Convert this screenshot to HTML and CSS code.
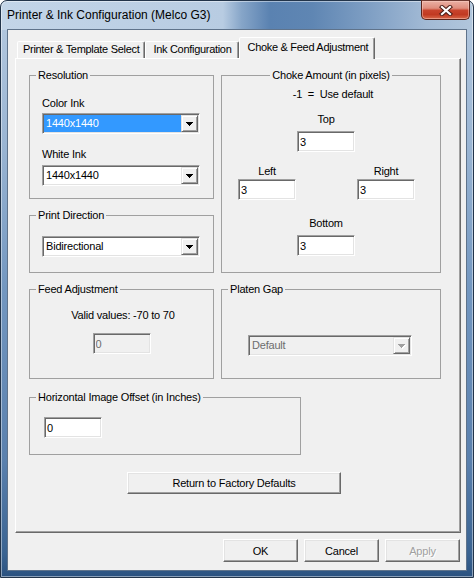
FILE: index.html
```html
<!DOCTYPE html>
<html>
<head>
<meta charset="utf-8">
<title>Printer &amp; Ink Configuration</title>
<link rel="stylesheet" href="styles.css">
</head>
<body>
<div class="window">
  <div class="titlebar">
    <span class="title">Printer &amp; Ink Configuration (Melco G3)</span>
    <div class="close">
      <svg width="14" height="11" viewBox="0 0 14 11">
        <path d="M3 2 L11 9 M11 2 L3 9" stroke="#4a1d16" stroke-width="4.2" stroke-linecap="square" fill="none"/>
        <path d="M3 2 L11 9 M11 2 L3 9" stroke="#fff" stroke-width="2.2" stroke-linecap="square" fill="none"/>
      </svg>
    </div>
  </div>
  <div class="client">
    <div class="tabs">
      <div class="tab">Printer &amp; Template Select</div>
      <div class="tab wide">Ink Configuration</div>
      <div class="tab active">Choke &amp; Feed Adjustment</div>
    </div>
    <div class="panel">
      <div class="grid">
        <fieldset class="box res">
          <legend>Resolution</legend>
          <div class="body">
            <div class="lbl first">Color Ink</div>
            <div class="combo">
              <span class="val sel">1440x1440</span>
              <span class="drop"><svg width="7" height="4" viewBox="0 0 7 4"><rect x="0" y="0" width="7" height="1"/><rect x="1" y="1" width="5" height="1"/><rect x="2" y="2" width="3" height="1"/><rect x="3" y="3" width="1" height="1"/></svg></span>
            </div>
            <div class="lbl second">White Ink</div>
            <div class="combo">
              <span class="val">1440x1440</span>
              <span class="drop"><svg width="7" height="4" viewBox="0 0 7 4"><rect x="0" y="0" width="7" height="1"/><rect x="1" y="1" width="5" height="1"/><rect x="2" y="2" width="3" height="1"/><rect x="3" y="3" width="1" height="1"/></svg></span>
            </div>
          </div>
        </fieldset>
        <fieldset class="box choke">
          <legend>Choke Amount (in pixels)</legend>
          <div class="note">-1&nbsp; =&nbsp; Use default</div>
          <div class="choke-grid">
            <div class="clbl top-l">Top</div>
            <input class="edit top-e" value="3">
            <div class="clbl left-l">Left</div>
            <div class="clbl right-l">Right</div>
            <input class="edit left-e" value="3">
            <input class="edit right-e" value="3">
            <div class="clbl bot-l">Bottom</div>
            <input class="edit bot-e" value="3">
          </div>
        </fieldset>
        <fieldset class="box dir">
          <legend>Print Direction</legend>
          <div class="body">
            <div class="combo">
              <span class="val">Bidirectional</span>
              <span class="drop"><svg width="7" height="4" viewBox="0 0 7 4"><rect x="0" y="0" width="7" height="1"/><rect x="1" y="1" width="5" height="1"/><rect x="2" y="2" width="3" height="1"/><rect x="3" y="3" width="1" height="1"/></svg></span>
            </div>
          </div>
        </fieldset>
        <fieldset class="box feed">
          <legend>Feed Adjustment</legend>
          <div class="valid">Valid values: -70 to 70</div>
          <input class="edit disabled" value="0" disabled>
        </fieldset>
        <fieldset class="box platen">
          <legend>Platen Gap</legend>
          <div class="body">
            <div class="combo disabled">
              <span class="val">Default</span>
              <span class="drop"><svg width="8" height="5" viewBox="0 0 8 5"><g fill="#fff" transform="translate(1 1)"><rect x="0" y="0" width="7" height="1"/><rect x="1" y="1" width="5" height="1"/><rect x="2" y="2" width="3" height="1"/><rect x="3" y="3" width="1" height="1"/></g><g fill="#a0a0a0"><rect x="0" y="0" width="7" height="1"/><rect x="1" y="1" width="5" height="1"/><rect x="2" y="2" width="3" height="1"/><rect x="3" y="3" width="1" height="1"/></g></svg></span>
            </div>
          </div>
        </fieldset>
      </div>
      <fieldset class="box offset">
        <legend>Horizontal Image Offset (in Inches)</legend>
        <div class="body">
          <input class="edit" value="0">
        </div>
      </fieldset>
      <button class="btn factory">Return to Factory Defaults</button>
    </div>
    <div class="actions">
      <button class="btn">OK</button>
      <button class="btn">Cancel</button>
      <button class="btn off">Apply</button>
    </div>
  </div>
</div>
</body>
</html>
```

FILE: styles.css
```css
* { box-sizing: border-box; }
html, body { margin: 0; padding: 0; }
body {
  width: 474px;
  height: 578px;
  overflow: hidden;
  background: #fff;
  font-family: "Liberation Sans", Arial, sans-serif;
  font-size: 11px;
  color: #000;
  letter-spacing: -0.2px;
}

.window {
  width: 474px;
  height: 578px;
  border: 1px solid #22344a;
  border-radius: 7px 7px 0 0;
  display: flex;
  flex-direction: column;
  background:
    linear-gradient(90deg, #c3d5e8 0%, #b8cce2 47%, #86a5c8 51%, #5a82b1 57%, #5f86b3 66%, #7f9fc4 78%, #a2bad5 90%, #b1c6dc 100%) top / 100% 29px no-repeat,
    linear-gradient(180deg, #b6cae0 0%, #9ab5d3 25%, #7397c0 50%, #5a80ad 80%, #3a6391 96%, #2b5280 100%);
  box-shadow: inset 0 0 0 1px rgba(255, 255, 255, 0.45);
}

.titlebar {
  height: 28px;
  display: flex;
  align-items: flex-start;
  padding-left: 6px;
}
.title {
  font-size: 12px;
  letter-spacing: 0;
  line-height: 28px;
  color: #000;
  white-space: nowrap;
}
.close {
  margin-left: auto;
  margin-right: 3px;
  margin-top: -1px;
  width: 49px;
  height: 20px;
  border: 1px solid #5b241b;
  border-top-color: #6e3a32;
  border-radius: 0 0 5px 5px;
  background: linear-gradient(180deg, #eab0a4 0%, #df8d7d 40%, #c8442d 52%, #c13a22 75%, #d8684a 100%);
  box-shadow: inset 0 0 0 1px rgba(255, 215, 205, 0.45);
  display: flex;
  align-items: center;
  justify-content: center;
}

.client {
  flex: 1;
  margin: 0 6px 6px;
  background: #f0f0f0;
  border: 1px solid #5f738b;
  padding: 7px 5px 0 7px;
  display: flex;
  flex-direction: column;
}

.tabs {
  display: flex;
  align-items: flex-end;
  height: 21px;
  padding-left: 2px;
}
.tab {
  height: 17px;
  padding: 0 5px 2px;
  border: 1px solid;
  border-bottom: none;
  border-color: #fff #696969 transparent #fff;
  border-radius: 2px 2px 0 0;
  box-shadow: inset -1px 0 #a0a0a0;
  background: #f0f0f0;
  line-height: 14px;
  letter-spacing: -0.3px;
  white-space: nowrap;
}
.tab.wide { padding: 0 7px 2px; }
.tab.active {
  height: 22px;
  margin-bottom: -1px;
  padding: 2px 6px 0 7px;
  position: relative;
  z-index: 1;
}

.panel {
  height: 475px;
  border: 1px solid;
  border-color: #fff #696969 #696969 #fff;
  box-shadow: inset -1px -1px #a0a0a0;
  padding: 10px 0 0 13px;
}

.grid {
  display: grid;
  grid-template-columns: 185px 220px;
  grid-template-rows: 130px 64px 96px;
  column-gap: 7px;
  row-gap: 10px;
}

.box {
  margin: 0;
  padding: 0;
  min-width: 0;
  border: 1px solid #a0a0a0;
}
.box legend {
  margin-left: 6px;
  padding: 0 2px;
  line-height: 13px;
  white-space: nowrap;
}

.res { grid-column: 1; grid-row: 1; }
.res .body { padding-left: 12px; }
.choke { grid-column: 2; grid-row: 1 / span 2; }
.choke legend { margin: 0 auto; }
.dir { grid-column: 1; grid-row: 2; }
.dir .body { padding: 14px 0 0 12px; }
.feed { grid-column: 1; grid-row: 3; }
.platen { grid-column: 2; grid-row: 3; }
.platen .body { padding: 39px 0 0 26px; }

.lbl { line-height: 13px; }
.lbl.first { margin-top: 15px; margin-bottom: 3px; }
.lbl.second { margin-top: 14px; margin-bottom: 4px; }

.combo {
  display: flex;
  width: 158px;
  height: 21px;
  border: 1px solid;
  border-color: #a0a0a0 #fff #fff #a0a0a0;
  box-shadow: inset 1px 1px #696969, inset -1px -1px #e3e3e3;
  background: #fff;
  padding: 1px;
}
.combo .val {
  flex: 1;
  padding-left: 2px;
  line-height: 17px;
  white-space: nowrap;
}
.combo .val.sel {
  background: #3399ff;
  color: #fff;
}
.combo .drop {
  width: 17px;
  height: 17px;
  background: #f0f0f0;
  border: 1px solid;
  border-color: #e3e3e3 #696969 #696969 #e3e3e3;
  box-shadow: inset 1px 1px #fff, inset -1px -1px #a0a0a0;
  display: flex;
  align-items: center;
  justify-content: center;
  padding-top: 1px;
}
.combo .drop svg { fill: #000; display: block; }
.combo.disabled { width: 164px; background: #f0f0f0; }
.combo.disabled .val { color: #6d6d6d; }

.edit {
  display: block;
  width: 58px;
  height: 21px;
  margin: 0;
  padding: 0 0 0 2px;
  font: inherit;
  letter-spacing: inherit;
  color: #000;
  background: #fff;
  border: 1px solid;
  border-color: #a0a0a0 #fff #fff #a0a0a0;
  box-shadow: inset 1px 1px #696969, inset -1px -1px #e3e3e3;
  outline: none;
}
.edit.disabled {
  background: #f0f0f0;
  color: #6d6d6d;
  margin: 11px auto 0;
}

.note {
  margin-top: 6px;
  text-align: center;
  line-height: 13px;
  padding-left: 4px;
}
.choke-grid {
  display: grid;
  grid-template-columns: 59px 60px 59px;
  margin: 12px 0 0 16px;
}
.choke-grid .clbl { line-height: 13px; text-align: center; width: 58px; }
.choke-grid .top-l { grid-column: 2; grid-row: 1; }
.choke-grid .top-e { grid-column: 2; grid-row: 2; margin-top: 5px; }
.choke-grid .left-l { grid-column: 1; grid-row: 3; margin-top: 13px; }
.choke-grid .right-l { grid-column: 3; grid-row: 3; margin-top: 13px; }
.choke-grid .left-e { grid-column: 1; grid-row: 4; margin-top: 1px; }
.choke-grid .right-e { grid-column: 3; grid-row: 4; margin-top: 1px; }
.choke-grid .bot-l { grid-column: 2; grid-row: 5; margin-top: 17px; }
.choke-grid .bot-e { grid-column: 2; grid-row: 6; margin-top: 5px; }

.valid {
  margin-top: 13px;
  text-align: center;
  line-height: 13px;
  padding-left: 3px;
}

.offset {
  width: 272px;
  height: 64px;
  margin-top: 12px;
}
.offset .body { padding: 13px 0 0 14px; }

.btn {
  display: block;
  width: 75px;
  height: 23px;
  margin: 0;
  padding: 0;
  font: inherit;
  letter-spacing: inherit;
  color: #000;
  background: #f0f0f0;
  border: 1px solid;
  border-color: #fff #696969 #696969 #fff;
  box-shadow: inset -1px -1px #a0a0a0, inset 1px 1px #e3e3e3;
}
.btn.factory {
  width: 214px;
  height: 22px;
  margin: 17px 0 0 98px;
}
.btn.off {
  color: #a0a0a0;
  text-shadow: 1px 1px 0 #fff;
}

.actions {
  display: flex;
  justify-content: flex-end;
  gap: 6px;
  margin-top: 6px;
  padding-right: 1px;
}
```
